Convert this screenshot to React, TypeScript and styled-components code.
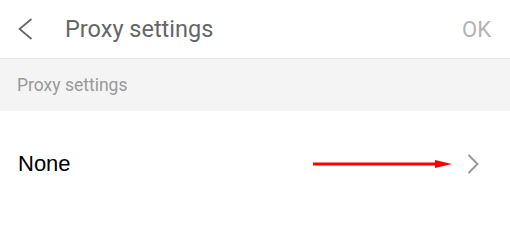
import React from "react";
import styled, { createGlobalStyle } from "styled-components";

const Global = createGlobalStyle`
  html, body { margin: 0; padding: 0; background: #ffffff; }
  body { font-family: Roboto, "Noto Sans", sans-serif; }
`;

const Page = styled.div`
  width: 510px;
  height: 210px;
  display: flex;
  flex-direction: column;
  background: #ffffff;
  overflow: hidden;
`;

const Header = styled.header`
  height: 58px;
  flex: none;
  display: flex;
  align-items: center;
  padding: 0 19px 0 17px;
  border-bottom: 1px solid #e6e6e6;
  box-sizing: content-box;
`;

const BackButton = styled.button`
  border: 0;
  background: none;
  padding: 0;
  margin: 0 32px 0 0;
  width: 16px;
  height: 22px;
  display: flex;
  align-items: center;
  justify-content: center;
`;

const Title = styled.h1`
  flex: 1;
  margin: 0;
  font-family: Roboto, sans-serif;
  font-weight: 400;
  font-size: 23.5px;
  color: #666666;
`;

const OkButton = styled.button`
  border: 0;
  background: none;
  padding: 0;
  font-family: Roboto, sans-serif;
  font-size: 22px;
  color: #b3b3b3;
`;

const SectionHeader = styled.div`
  height: 52px;
  flex: none;
  display: flex;
  align-items: center;
  padding: 0 17px;
  background: #f4f4f4;
  font-family: Roboto, sans-serif;
  font-size: 17.5px;
  color: #999999;
`;

const Row = styled.div`
  height: 106px;
  flex: none;
  display: flex;
  align-items: center;
  padding: 0 31px 0 18px;
`;

const RowLabel = styled.span`
  flex: 1;
  font-family: "Liberation Sans", Arial, sans-serif;
  font-size: 22px;
  color: #000000;
`;

const BackChevron = () => (
  <svg width="16" height="22" viewBox="0 0 16 22">
    <path d="M14.5 1 L2.5 11 L14.5 21" fill="none" stroke="#666666" strokeWidth="1.7" />
  </svg>
);

const NextChevron = () => (
  <svg width="12" height="20" viewBox="0 0 12 20">
    <path d="M1.5 1 L10.5 10 L1.5 19" fill="none" stroke="#999999" strokeWidth="2" />
  </svg>
);

const ArrowIcon = () => (
  <svg width="139" height="10" viewBox="0 0 139 10" style={{ marginRight: 15 }}>
    <line x1="0" y1="5" x2="126" y2="5" stroke="#ff0000" strokeWidth="3" />
    <polygon points="122,1 139,5 122,9" fill="#ff0000" />
  </svg>
);

export default function App() {
  return (
    <Page>
      <Global />
      <Header>
        <BackButton>
          <BackChevron />
        </BackButton>
        <Title>Proxy settings</Title>
        <OkButton>OK</OkButton>
      </Header>
      <SectionHeader>Proxy settings</SectionHeader>
      <Row>
        <RowLabel>None</RowLabel>
        <ArrowIcon />
        <NextChevron />
      </Row>
    </Page>
  );
}
